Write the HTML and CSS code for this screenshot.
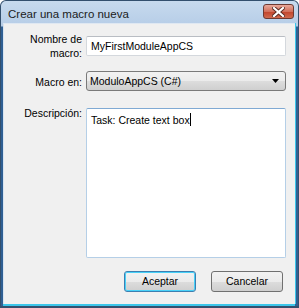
FILE: index.html
```html
<!DOCTYPE html>
<html>
	<head>
		<meta charset="utf-8">
		<title>Crear una macro nueva</title>
		<link rel="stylesheet" href="styles.css">
	</head>
	<body>
		<div class="window">
			<div class="titlebar">
				<span class="title">Crear una macro nueva</span>
				<div class="close">
					<svg width="13" height="10" viewBox="0 0 13 10">
						<path d="M2 1 L11 9 M11 1 L2 9" stroke="#5a2a22" stroke-width="4" stroke-linecap="square"/>
						<path d="M2 1 L11 9 M11 1 L2 9" stroke="#ffffff" stroke-width="2.2" stroke-linecap="square"/>
					</svg>
				</div>
			</div>
			<div class="client">
				<div class="form">
					<label class="lbl lbl-two">Nombre de<br>macro:</label>
					<div class="textbox">MyFirstModuleAppCS</div>

					<label class="lbl">Macro en:</label>
					<div class="combo">
						<span>ModuloAppCS (C#)</span>
						<svg width="7" height="4" viewBox="0 0 7 4"><path d="M0 0 H7 L3.5 4 Z" fill="#000"/></svg>
					</div>

					<label class="lbl lbl-top">Descripción:</label>
					<div class="textarea">Task: Create text box<span class="caret"></span></div>
				</div>
				<div class="buttons">
					<div class="btn btn-default">Aceptar</div>
					<div class="btn">Cancelar</div>
				</div>
			</div>
		</div>
	</body>
</html>
```

FILE: styles.css
```css
html,body{
	margin: 0;
	padding: 0;
	background: #ffffff;
}
.window{
	width: 299px;
	height: 308px;
	box-sizing: border-box;
	border: 1px solid #33506e;
	border-bottom-width: 2px;
	border-radius: 6px 6px 0 0;
	background: linear-gradient(#c7daee, #b6cde7 25px, #2f5f93 26px);
	padding: 0 3px 2px 2px;
	display: flex;
	flex-direction: column;
	font-family: "Liberation Sans", Arial, sans-serif;
	font-size: 10.5px;
	color: #000;
}
.titlebar{
	height: 24px;
	display: flex;
	align-items: flex-start;
	justify-content: space-between;
}
.title{
	font-size: 11.5px;
	margin: 7px 0 0 5px;
	color: #1b1b1b;
}
.close{
	width: 31px;
	height: 15px;
	margin-top: 3px;
	margin-right: 1px;
	box-sizing: border-box;
	border: 1px solid #6d3a33;
	border-radius: 3px;
	background: linear-gradient(#e9a99b, #d2705c 50%, #c2432b 51%, #cf6a4f);
	display: flex;
	align-items: center;
	justify-content: center;
}
.client{
	flex: 1;
	background: #f0f0f0;
	border-top: 1px solid #dfe8f2;
	border-left: 1px solid #d8e4f0;
	box-shadow: 0 2px 0 #3cc6ea, 1px 0 0 #3cc6ea;
	padding: 12px 9px 12px 9px;
	display: flex;
	flex-direction: column;
}
.form{
	display: grid;
	grid-template-columns: 1fr 200px;
	column-gap: 4px;
	row-gap: 15px;
	align-items: center;
}
.lbl{
	text-align: right;
	line-height: 14px;
}
.lbl-two{
	margin: -4px 0;
}
.lbl-top{
	align-self: start;
	margin-top: -2px;
}
.textbox{
	height: 20px;
	box-sizing: border-box;
	background: #fff;
	border: 1px solid #d4d8dd;
	border-top-color: #b9bdc3;
	border-radius: 2px;
	padding: 0 4px;
	line-height: 18px;
}
.combo{
	height: 20px;
	box-sizing: border-box;
	border: 1px solid #7a7a7a;
	border-radius: 3px;
	background: linear-gradient(#f2f2f2, #ebebeb 50%, #dddddd 51%, #cfcfcf);
	padding: 0 6px 0 3px;
	display: flex;
	align-items: center;
	justify-content: space-between;
	margin-bottom: 2px;
}
.textarea{
	height: 150px;
	box-sizing: border-box;
	background: #fff;
	border: 1px solid #b5cfe7;
	border-top-color: #7fa9d3;
	border-radius: 2px;
	padding: 4px 4px;
	line-height: 14px;
}
.caret{
	display: inline-block;
	width: 1px;
	height: 13px;
	background: #000;
	vertical-align: -2px;
}
.buttons{
	display: flex;
	justify-content: flex-end;
	gap: 15px;
	margin-top: 13px;
	padding-right: 3px;
}
.btn{
	width: 72px;
	height: 21px;
	box-sizing: border-box;
	border: 1px solid #707070;
	border-radius: 3px;
	background: linear-gradient(#f2f2f2, #ebebeb 50%, #dddddd 51%, #cfcfcf);
	text-align: center;
	line-height: 19px;
}
.btn-default{
	border-color: #3c7fb1;
	box-shadow: inset 0 0 0 1px #48d1f8;
}
```
